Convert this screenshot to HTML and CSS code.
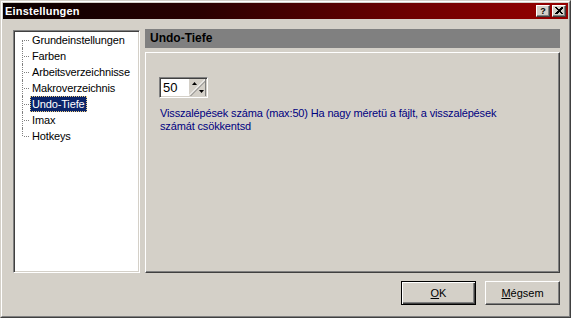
FILE: index.html
```html
<!DOCTYPE html>
<html>
<head>
<meta charset="utf-8">
<title>Einstellungen</title>
<link rel="stylesheet" href="styles.css">
</head>
<body>
<div class="window">
  <div class="frame">
    <div class="titlebar">
      <span class="title">Einstellungen</span>
      <div class="tbtns">
        <div class="tbtn help">?</div>
        <div class="tbtn close">
          <svg width="14" height="12" viewBox="0 0 14 12">
            <path d="M3.5 2.5 L10 9 M4.5 2.5 L11 9 M10 2.5 L3.5 9 M11 2.5 L4.5 9" stroke="#000" stroke-width="1" fill="none" shape-rendering="crispEdges"/>
          </svg>
        </div>
      </div>
    </div>
    <div class="content">
      <div class="main">
        <ul class="tree">
          <li><span class="label">Grundeinstellungen</span></li>
          <li><span class="label">Farben</span></li>
          <li><span class="label">Arbeitsverzeichnisse</span></li>
          <li><span class="label">Makroverzeichnis</span></li>
          <li><span class="label selected">Undo-Tiefe</span></li>
          <li><span class="label">Imax</span></li>
          <li><span class="label">Hotkeys</span></li>
        </ul>
        <div class="panel">
          <div class="phead">Undo-Tiefe</div>
          <div class="pbody">
            <div class="spin">
              <span class="spinval">50</span>
              <svg class="spinbtn" width="17" height="17" viewBox="0 0 17 17">
                <rect x="0" y="0" width="17" height="17" fill="#d4d0c8"/>
                <path d="M0 16.5 L16.5 0" stroke="#ffffff" stroke-width="1"/>
                <path d="M1.5 17 L17 1.5" stroke="#808080" stroke-width="1"/>
                <path d="M16.5 0 V17" stroke="#808080" stroke-width="1"/>
                <path d="M3 6 L8 6 L5.5 3 Z" fill="#000"/>
                <path d="M10 11 L15 11 L12.5 14 Z" fill="#000"/>
              </svg>
            </div>
            <p class="desc">Visszalépések száma (max:50) Ha nagy méretü a fájlt, a visszalépések<br>számát csökkentsd</p>
          </div>
        </div>
      </div>
      <div class="buttons">
        <div class="btn default"><span class="acc">O</span>K</div>
        <div class="btn"><span class="acc">M</span>égsem</div>
      </div>
    </div>
  </div>
</div>
</body>
</html>
```

FILE: styles.css
```css
html, body {
  margin: 0;
  padding: 0;
  background: #d4d0c8;
}

body {
  font-family: "Liberation Sans", Arial, sans-serif;
  font-size: 11px;
  color: #000;
}

.window {
  width: 571px;
  height: 318px;
  box-sizing: border-box;
  border: 1px solid;
  border-color: #d4d0c8 #404040 #404040 #d4d0c8;
  background: #d4d0c8;
}

.frame {
  height: 100%;
  box-sizing: border-box;
  border: 1px solid;
  border-color: #ffffff #808080 #808080 #ffffff;
  padding: 1px;
  display: flex;
  flex-direction: column;
}

.titlebar {
  height: 16px;
  flex: none;
  display: flex;
  align-items: center;
  justify-content: space-between;
  background: linear-gradient(to right, #0a0000 0%, #2a0000 35%, #6e0000 72%, #960000 100%);
  padding-left: 2px;
  padding-right: 2px;
}

.title {
  color: #fff;
  font-weight: bold;
  font-size: 11px;
  letter-spacing: 0.2px;
  line-height: 16px;
}

.tbtns {
  display: flex;
  gap: 2px;
  align-items: center;
}

.tbtn {
  width: 14px;
  height: 12px;
  box-sizing: border-box;
  background: #d4d0c8;
  border: 1px solid;
  border-color: #ffffff #404040 #404040 #ffffff;
  box-shadow: inset -1px -1px #808080;
  display: flex;
  align-items: center;
  justify-content: center;
  font-weight: bold;
  font-size: 9px;
  line-height: 10px;
  overflow: hidden;
}

.tbtn.close svg {
  display: block;
  margin: -1px;
}

.content {
  flex: 1;
  display: flex;
  flex-direction: column;
  padding: 10px 8px 10px 10px;
}

.main {
  height: 244px;
  display: flex;
  gap: 5px;
}

.tree {
  width: 127px;
  margin: 1px 0 0 0;
  list-style: none;
  box-sizing: border-box;
  background: #fff;
  border: 1px solid;
  border-color: #808080 #ffffff #ffffff #808080;
  box-shadow: inset 1px 1px #404040, inset -1px -1px #d4d0c8;
  padding: 1px;
}

.tree li {
  position: relative;
  height: 16px;
  padding-left: 15px;
}

.tree li::before {
  content: "";
  position: absolute;
  left: 7px;
  top: 0;
  bottom: 0;
  border-left: 1px dotted #808080;
}

.tree li:first-child::before {
  top: 8px;
}

.tree li:last-child::before {
  bottom: 8px;
}

.tree li::after {
  content: "";
  position: absolute;
  left: 9px;
  width: 5px;
  top: 8px;
  border-top: 1px dotted #808080;
}

.label {
  display: inline-block;
  height: 16px;
  box-sizing: border-box;
  line-height: 14px;
  padding: 0 1px;
  border: 1px solid transparent;
  white-space: nowrap;
  letter-spacing: -0.15px;
}

.label.selected {
  background: #0a246a;
  color: #fff;
  border: 1px dotted #f0d080;
}

.panel {
  width: 415px;
  display: flex;
  flex-direction: column;
}

.phead {
  height: 19px;
  flex: none;
  background: #808080;
  color: #000;
  font-weight: bold;
  font-size: 12px;
  line-height: 19px;
  padding-left: 5px;
}

.pbody {
  flex: 1;
  margin-top: 4px;
  box-sizing: border-box;
  border: 1px solid;
  border-color: #ffffff #404040 #404040 #ffffff;
  box-shadow: inset -1px -1px #808080;
  padding: 24px 0 0 13px;
}

.spin {
  width: 49px;
  height: 21px;
  box-sizing: border-box;
  display: flex;
  background: #fff;
  border: 1px solid;
  border-color: #808080 #ffffff #ffffff #808080;
  box-shadow: inset 1px 1px #404040, inset -1px -1px #d4d0c8;
  padding: 1px;
}

.spinval {
  width: 28px;
  padding-left: 2px;
  box-sizing: border-box;
  font-size: 13px;
  line-height: 17px;
}

.spinbtn {
  display: block;
}

.desc {
  margin: 9px 0 0 1px;
  color: #000080;
  font-size: 11px;
  letter-spacing: -0.15px;
  line-height: 13px;
}

.buttons {
  margin-top: 8px;
  display: flex;
  justify-content: flex-end;
  gap: 9px;
}

.btn {
  width: 75px;
  height: 24px;
  box-sizing: border-box;
  background: #d4d0c8;
  border: 1px solid;
  border-color: #ffffff #404040 #404040 #ffffff;
  box-shadow: inset -1px -1px #808080;
  display: flex;
  align-items: center;
  justify-content: center;
  font-size: 11px;
}

.btn.default {
  border-color: #000;
  box-shadow: inset 1px 1px #ffffff, inset -1px -1px #404040, inset -2px -2px #808080;
}

.acc {
  text-decoration: underline;
}
```
